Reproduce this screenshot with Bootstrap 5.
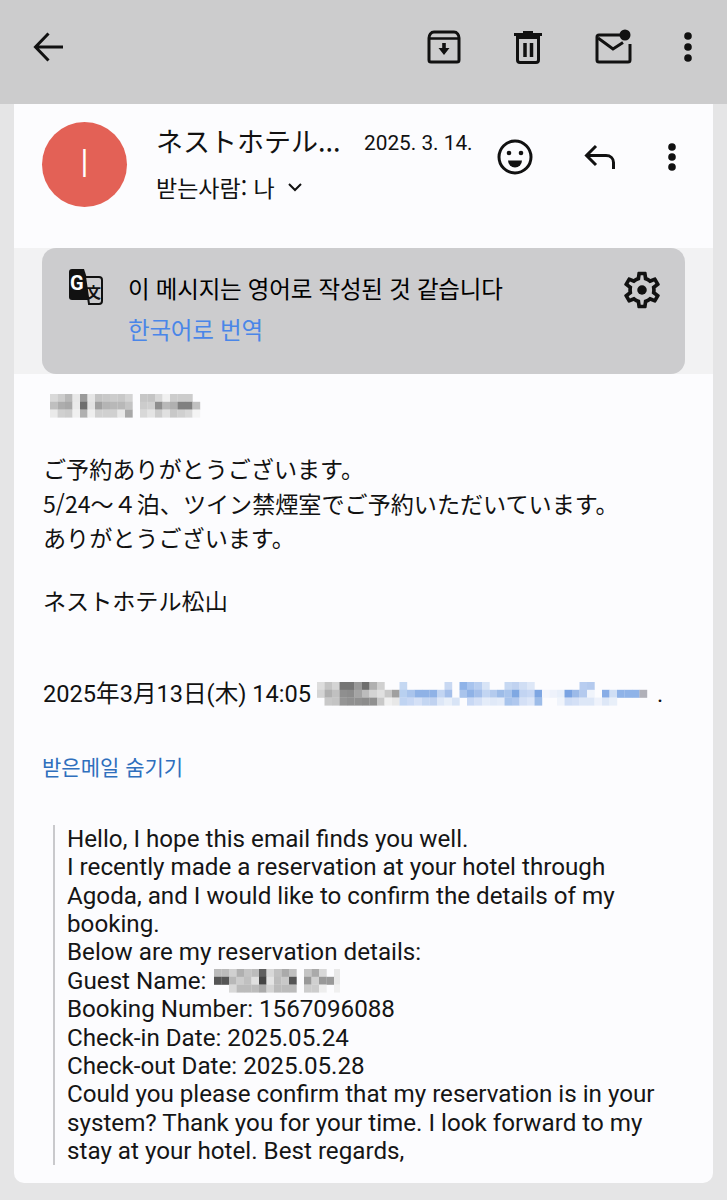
<!DOCTYPE html>
<html lang="ko">
<head>
  <meta charset="UTF-8">
  <meta name="viewport" content="width=device-width, initial-scale=1.0">
  <title>Mail</title>
  <link rel="stylesheet" href="https://cdn.jsdelivr.net/npm/bootstrap@5.3.0/dist/css/bootstrap.min.css">
  <style>
    html, body { height: 1200px; overflow: hidden; }
    body { background: #e5e5e6; color: #111; font-family: Roboto, "Noto Sans CJK KR", sans-serif; }
    svg { display: block; flex: none; }
    .top-bar { height: 104px; background: #cccccd; padding: 0 34px 10px 33px; }
    .top-actions { gap: 52px; }
    .top-more { margin-left: -2px; }
    .mail-sheet { height: 1079px; margin: 0 14px; background: #fcfcfe; border-radius: 0 0 10px 10px; overflow: hidden; }
    .mail-head { height: 144px; padding: 18px 0 0 28px; }
    .sender-avatar { width: 85px; height: 85px; flex: none; background: #e36156; color: #fff; font-size: 39px; font-weight: 300; }
    .sender-info { width: 208px; flex: none; margin-left: 29px; }
    .sender-name { font: 27px/38px "Noto Sans CJK JP", sans-serif; white-space: nowrap; }
    .mail-date { font: 20.8px/26px Roboto, sans-serif; margin-top: 8px; white-space: nowrap; width: 108px; flex: none; }
    .sender-to { font: 23px/30px "Noto Sans CJK KR", sans-serif; margin-top: 12px; white-space: nowrap; }
    .head-actions { gap: 51px; margin: 17px 0 0 25px; }
    .translate-strip { height: 126px; background: #f2f2f3; padding: 0 28px; }
    .translate-box { height: 126px; background: #ccccce; border-radius: 14px; padding: 20px 21px 0 24px; }
    .translate-text { margin-left: 25px; font: 23.5px/41px "Noto Sans CJK KR", sans-serif; letter-spacing: -.2px; color: #000; }
    .translate-link { color: #4a86e8; }
    .mail-body { padding: 20px 30px 0 29px; font: 23.1px/34.5px "Noto Sans CJK JP", sans-serif; }
    .greeting-blur { margin-left: 7px; }
    .body-gap { margin-top: 28px; }
    .first-gap { margin-top: 33px; }
    .date-line { font-family: Roboto, "Noto Sans CJK JP", sans-serif; font-size: 23.6px; line-height: 34px; margin-top: 60px; white-space: nowrap; }
    .hide-link { color: #2f6fbd; font: 21px/30px "Noto Sans CJK KR", sans-serif; margin: 40px 0 0 -1px; }
    .quoted { margin: 44px 0 0 10px; border-left: 2px solid #c9c9cc; padding-left: 12px; font: 24.2px/28.36px Roboto, sans-serif; height: 340px; color: #151515; width: 612px; }
    .guest-line { display: flex; align-items: center; gap: 8px; }
    .pixel-blur { filter: blur(.7px); }
  </style>
</head>
<body>
  <div class="top-bar d-flex align-items-center justify-content-between">
    <svg width="30" height="30" viewBox="0 0 30 30"><path d="M30 15H3M15.500 1.500 2.500 15l13 13.500" fill="none" stroke="#111" stroke-width="3"/></svg>
    <div class="d-flex align-items-center top-actions">
      <svg width="34" height="34" viewBox="0 0 34 34"><path d="M2 8c0-3 2-6 5-6h20c3 0 5 3 5 6v22a2 2 0 0 1-2 2H4a2 2 0 0 1-2-2z" fill="none" stroke="#111" stroke-width="3"/><path d="M2 8.500h30" stroke="#111" stroke-width="2.500"/><path d="M15.200 13h3.600v5h3.700L17 25l-5.500-7h3.700z" fill="#111"/></svg>
      <svg width="30" height="36" viewBox="0 0 30 36"><path d="M4.500 8.500h21V31a2.500 2.500 0 0 1-2.500 2.500H7A2.500 2.500 0 0 1 4.500 31zM1 5.500h28" fill="none" stroke="#111" stroke-width="3"/><path d="M10 5V2h10v3" fill="#111"/><path d="M12 14v14M18.500 14v14" stroke="#111" stroke-width="3.500"/></svg>
      <svg width="38" height="36" viewBox="0 0 38 36"><path d="M26 6H4a2 2 0 0 0-2 2v23a2 2 0 0 0 2 2h29a2 2 0 0 0 2-2V15" fill="none" stroke="#111" stroke-width="3"/><path d="m3 9 15 11 10-6.500" fill="none" stroke="#111" stroke-width="3"/><circle cx="30" cy="6" r="5.500" fill="#111"/></svg>
      <svg class="top-more" width="10" height="32" viewBox="0 0 10 32"><circle cx="5" cy="5" r="3.800" fill="#111"/><circle cx="5" cy="16" r="3.800" fill="#111"/><circle cx="5" cy="27" r="3.800" fill="#111"/></svg>
    </div>
  </div>

  <div class="mail-sheet">
    <div class="mail-head d-flex align-items-start">
      <div class="sender-avatar rounded-circle d-flex align-items-center justify-content-center">I</div>
      <div class="sender-info">
        <div class="sender-name">ネストホテル...</div>
        <div class="sender-to d-flex align-items-center gap-2">받는사람: 나
          <svg class="ms-1" width="16" height="10" viewBox="0 0 16 10"><path d="m2 2 6 6 6-6" fill="none" stroke="#111" stroke-width="2"/></svg>
        </div>
      </div>
      <div class="mail-date">2025. 3. 14.</div>
      <div class="d-flex align-items-center head-actions">
        <svg width="36" height="36" viewBox="0 0 36 36"><circle cx="18" cy="18" r="16" fill="none" stroke="#111" stroke-width="3"/><circle cx="12" cy="14" r="2.300" fill="#111"/><circle cx="24" cy="14" r="2.300" fill="#111"/><path d="M11 21.500h14a7 7 0 0 1-14 0z" fill="#111"/></svg>
        <svg width="32" height="26" viewBox="0 0 32 26"><path d="M12 2 2.500 11.500 12 21M3 11.500h19c4.500 0 7.500 3 7.500 7V25" fill="none" stroke="#111" stroke-width="3"/></svg>
        <svg width="10" height="30" viewBox="0 0 10 30"><circle cx="5" cy="5" r="3.800" fill="#111"/><circle cx="5" cy="15" r="3.800" fill="#111"/><circle cx="5" cy="25" r="3.800" fill="#111"/></svg>
      </div>
    </div>

    <div class="translate-strip">
      <div class="translate-box d-flex align-items-start">
        <svg width="37" height="38" viewBox="0 0 37 38">
          <path d="M3 4a3 3 0 0 1 3-3h12l10 31H6a3 3 0 0 1-3-3z" fill="#111"/>
          <path d="M19 9h14a3 3 0 0 1 3 3v21a3 3 0 0 1-3 3H23z" fill="#ccccce" stroke="#111" stroke-width="2"/>
          <text x="4" y="22" font-family="Roboto, sans-serif" font-size="20" font-weight="700" fill="#fff">G</text>
          <text x="20" y="30" font-family="Noto Sans CJK SC, sans-serif" font-size="15" font-weight="700" fill="#111">文</text>
        </svg>
        <div class="translate-text flex-grow-1">
          <div>이 메시지는 영어로 작성된 것 같습니다</div>
          <div class="translate-link">한국어로 번역</div>
        </div>
        <svg width="44" height="44" viewBox="0 0 24 24"><path fill="#111" d="M19.430 12.980c.04-.32.07-.64.07-.98 0-.34-.03-.66-.07-.98l2.110-1.650c.19-.15.24-.42.12-.64l-2-3.460c-.09-.16-.26-.25-.44-.25-.06 0-.12.01-.17.03l-2.490 1c-.52-.4-1.080-.73-1.690-.98l-.38-2.650C14.460 2.180 14.250 2 14 2h-4c-.25 0-.46.18-.49.42l-.38 2.650c-.61.25-1.170.59-1.690.98l-2.490-1c-.06-.02-.12-.03-.18-.03-.17 0-.34.09-.43.25l-2 3.460c-.13.22-.07.49.12.64l2.110 1.650c-.04.32-.07.65-.07.98 0 .33.03.66.07.98l-2.110 1.650c-.19.15-.24.42-.12.64l2 3.460c.09.16.26.25.44.25.06 0 .12-.01.17-.03l2.490-1c.52.4 1.080.73 1.690.98l.38 2.650c.03.24.24.42.49.42h4c.25 0 .46-.18.49-.42l.38-2.650c.61-.25 1.170-.59 1.690-.98l2.490 1c.06.02.12.03.18.03.17 0 .34-.09.43-.25l2-3.460c.12-.22.07-.49-.12-.64l-2.110-1.650zm-1.980-1.710c.04.31.05.52.05.73 0 .21-.02.43-.05.73l-.14 1.130.89.7 1.080.84-.7 1.210-1.270-.51-1.040-.42-.9.68c-.43.32-.84.56-1.250.73l-1.060.43-.16 1.130-.2 1.350h-1.400l-.19-1.350-.16-1.130-1.060-.43c-.43-.18-.83-.41-1.230-.71l-.91-.7-1.060.43-1.270.51-.7-1.210 1.080-.84.89-.7-.14-1.130c-.03-.31-.05-.54-.05-.74s.02-.43.05-.73l.14-1.130-.89-.7-1.080-.84.7-1.210 1.270.51 1.040.42.9-.68c.43-.32.84-.56 1.250-.73l1.060-.43.16-1.130.2-1.350h1.390l.19 1.350.16 1.130 1.060.43c.43.18.83.41 1.230.71l.91.7 1.060-.43 1.270-.51.7 1.210-1.070.85-.89.7.14 1.130z"/><circle cx="12" cy="12" r="2.600" fill="#111"/></svg>
      </div>
    </div>

    <div class="mail-body">
      <svg class="pixel-blur greeting-blur" id="blurGreeting" width="154" height="24"></svg>
      <div class="first-gap">ご予約ありがとうございます。<br>5/24〜４泊、ツイン禁煙室でご予約いただいています。<br>ありがとうございます。</div>
      <div class="body-gap">ネストホテル松山</div>
      <div class="date-line d-flex align-items-center">2025年3月13日(木) 14:05&nbsp;<svg class="pixel-blur" id="blurSender" width="340" height="24"></svg>.</div>
      <div class="hide-link">받은메일 숨기기</div>
      <div class="quoted">Hello, I hope this email finds you well.<br>I recently made a reservation at your hotel through Agoda, and I would like to confirm the details of my booking.<br>Below are my reservation details:
        <div class="guest-line">Guest Name: <svg class="pixel-blur" id="blurGuest" width="126" height="24"></svg></div>Booking Number: 1567096088<br>Check-in Date: 2025.05.24<br>Check-out Date: 2025.05.28<br>Could you please confirm that my reservation is in your system? Thank you for your time. I look forward to my stay at your hotel. Best regards,</div>
    </div>
  </div>
  <script src="https://cdn.jsdelivr.net/npm/bootstrap@5.3.0/dist/js/bootstrap.bundle.min.js"></script>
  <script>
    // redacted bits of the mail, drawn as mosaic cells (rows of colours, "-" = empty)
    const mosaics = {
      blurGreeting: [
        "d9d9d9 cccccc b8b8b8 e8e8e8 9a9a9a e6e6e6 c4c4c4 c8c8c8 cccccc c8c8c8 d4d4d4 - c6c6c6 c4c4c4 d8d8d8 f0f0f0 cccccc cccccc cccccc -",
        "bfbfbf adadad a8a8a8 eaeaea 6e6e6e e2e2e2 a0a0a0 b4b4b4 b8b8b8 b8b8b8 c4c4c4 - cccccc d0d0d0 8e8e8e b8b8b8 b0b0b0 808080 808080 c0c0c0",
        "eaeaea d0d0d0 cccccc f0f0f0 b0b0b0 eeeeee d0d0d0 d0d0d0 d0d0d0 e8e8e8 a8a8a8 - d8d8d8 e4e4e4 cccccc e0e0e0 c8c8c8 d0d0d0 d8d8d8 f4f4f4"
      ],
      blurSender: [
        "dddddd c4c4c4 d4d4d4 757575 757575 999999 6e6e6e b0b0b0 d0d0d0 - - c5d8f2 - - - - - c8d8f2 - 8fb3e8 a8c4ee b8cef0 d8e4f6 - - c6d8f2 c0d2f0 d0def4 dde7f7 - - - - - - b8cdf0 b4caee - - - - - - - - -",
        "d4d4d4 b0b0b0 c0c0c0 8f8f8f 8c8c8c a4a4a4 bcbcbc d4d4d4 e0e0e0 c8c8c8 a0a0a0 b8d0f0 a9c4ec 8fb2e6 8fb2e6 8fb2e6 c2d5f2 a4bfea - a9c4ec 8fb2e6 a4bfea c2d5f2 b4cbee 9dbce8 a8c4ec 7fa8e2 c2d4f2 c8d8f4 7ea6e2 f4f6fc eef2fb e8effa 7aa3e2 9cbae8 b4caee f0f4fb - 88ade6 d0dff5 8fb3e8 8fb3e8 8fb3e8 b0b0b8 -",
        "- c8c8c8 c4c4c4 959595 909090 909090 8c8c8c 909090 c8c8c8 f0f0f0 e8e8e8 c0d4f2 c8d8f4 d4e0f6 c4d6f2 c0d2f0 dde7f7 e8eff9 d8e4f6 - c8d8f4 d4e0f6 e4ecf9 e0e9f8 e4ecf9 a8c4ec b0c8ee d4e0f6 dce6f8 9dbce8 - - f0f4fb cfddf5 d4e0f6 dde7f7 dde7f7 eef2fb dde7f7 e8eff9 - - - - -"
      ],
      blurGuest: [
        "bbbbbb bbbbbb d0d0d0 b0b0b0 c4c4c4 bcbcbc 5e5e5e d8d8d8 c0c0c0 aaaaaa c0c0c0 - c4c4c4 aaaaaa d8d8d8 - e8e8e8",
        "555555 555555 b8b8b8 cccccc c0c0c0 e0e0e0 444444 e4e4e4 bcbcbc c8c8c8 555555 - 999999 d0d0d0 999999 999999 e8e8e8",
        "- - d8d8d8 bbbbbb bbbbbb bbbbbb aaaaaa d4d4d4 bbbbbb bbbbbb bbbbbb - cccccc cccccc eeeeee - f0f0f0"
      ]
    };
    for (const [id, rows] of Object.entries(mosaics)) {
      let cells = "";
      rows.forEach((row, r) => row.split(" ").forEach((colour, c) => {
        if (colour !== "-") cells += `<rect x="${c * 7.5}" y="${r * 7.8}" width="7.7" height="8" fill="#${colour}"/>`;
      }));
      document.getElementById(id).innerHTML = cells;
    }
  </script>
</body>
</html>
